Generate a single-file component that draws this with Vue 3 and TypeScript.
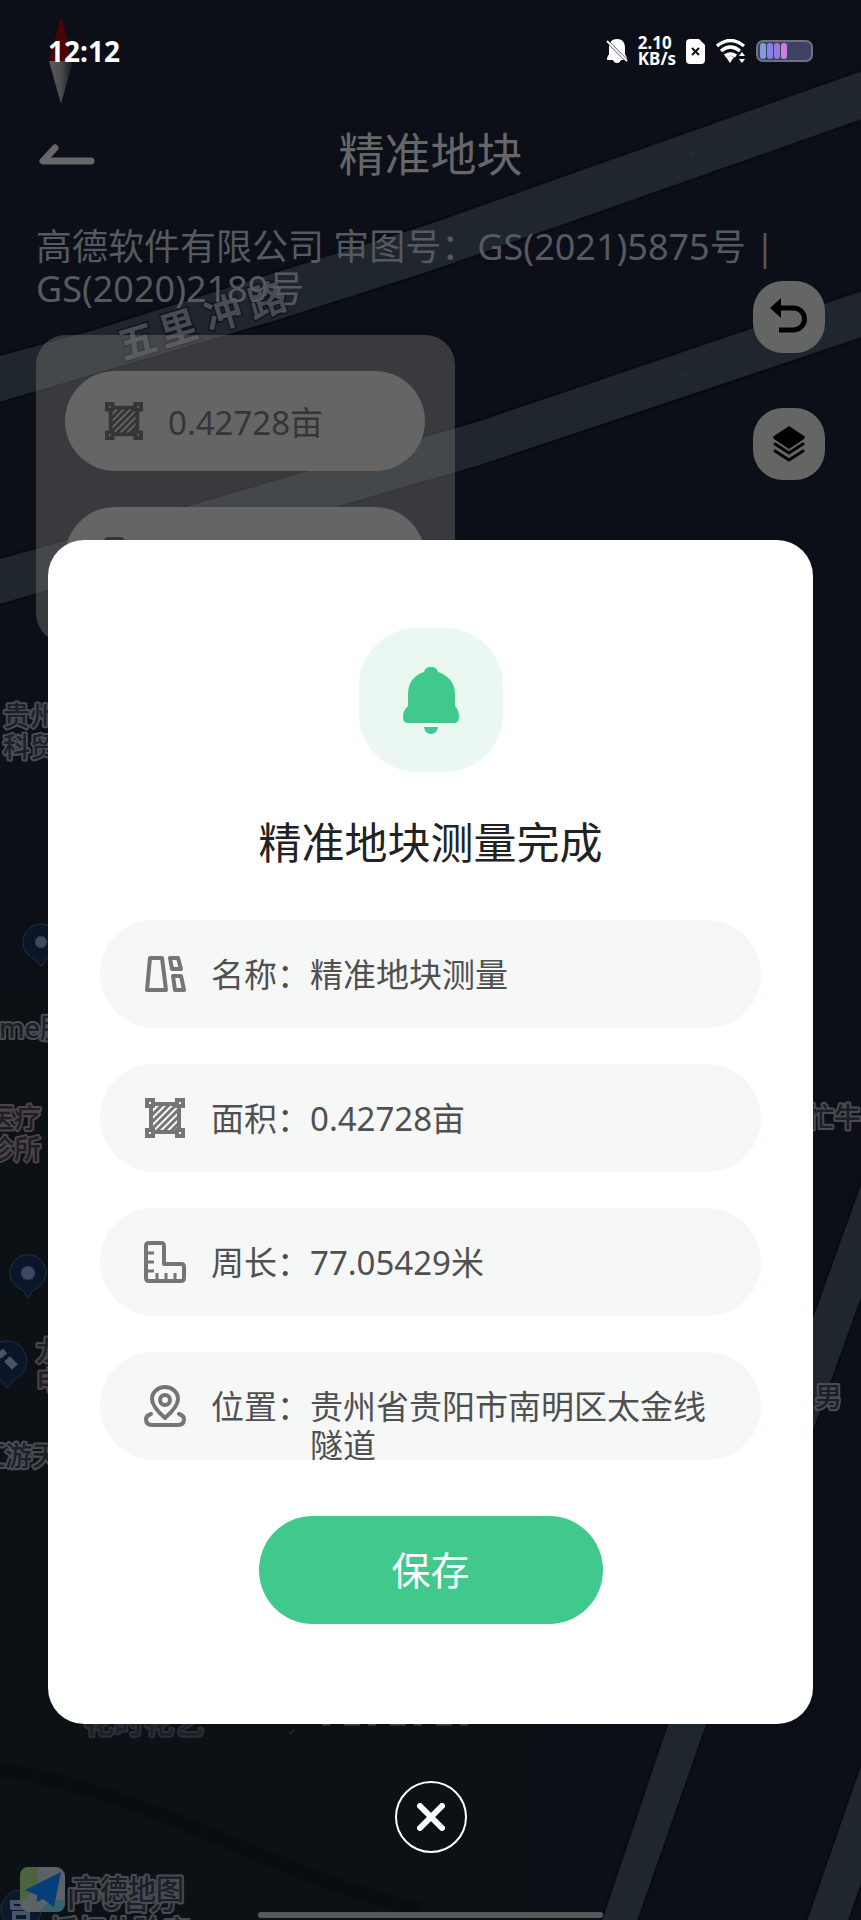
<script setup lang="ts">
import { ref } from 'vue'

interface Field {
  icon: string
  label: string
  value: string
}

interface Place {
  text: string
  x: number
  y: number
  tone?: string
}

const area = '0.42728亩'
const perimeter = '77.05429米'
const open = ref(true)

const fields: Field[] = [
  { icon: 'plots', label: '名称：', value: '精准地块测量' },
  { icon: 'area', label: '面积：', value: area },
  { icon: 'ruler', label: '周长：', value: perimeter },
  { icon: 'pin', label: '位置：', value: '贵州省贵阳市南明区太金线隧道' },
]

const places: Place[] = [
  { text: '贵州', x: 3, y: 726 },
  { text: '科贸', x: 3, y: 757 },
  { text: 'me服', x: -1, y: 1038 },
  { text: '医疗', x: -13, y: 1128, tone: 'warm' },
  { text: '诊所', x: -13, y: 1159, tone: 'warm' },
  { text: '龙', x: 36, y: 1361, tone: 'warm' },
  { text: '电', x: 36, y: 1391, tone: 'warm' },
  { text: '汇游天', x: -22, y: 1466 },
  { text: '忙牛', x: 807, y: 1127 },
  { text: '男', x: 815, y: 1407 },
]
</script>

<template>
  <main class="screen">
    <svg class="symbols" aria-hidden="true">
      <symbol id="plots" viewBox="0 0 42 42" fill="none" stroke="currentColor" stroke-width="4" stroke-linejoin="round">
        <path d="M6 5h12l4 32H3z" />
        <path d="M26 5h8l3 11h-9z" />
        <path d="M29 23h8l3 14h-9z" />
      </symbol>
      <symbol id="area" viewBox="0 0 42 42" fill="none" stroke="currentColor" stroke-width="3">
        <path d="M7 7h28v28H7z" stroke-width="4" />
        <path d="M8 18L18 8M8 25L25 8M8 32L32 8M12 35L35 12M19 35L35 19M26 35l9-9" />
        <path fill="#f6f7f7" stroke-width="4" d="M3 3h6v6H3zM33 3h6v6h-6zM3 33h6v6H3zM33 33h6v6h-6z" />
      </symbol>
      <symbol id="area-dim" viewBox="0 0 42 42" fill="none" stroke="currentColor" stroke-width="3">
        <path d="M7 7h28v28H7z" stroke-width="4" />
        <path d="M8 18L18 8M8 25L25 8M8 32L32 8M12 35L35 12M19 35L35 19M26 35l9-9" />
        <path fill="#656565" stroke-width="4" d="M3 3h6v6H3zM33 3h6v6h-6zM3 33h6v6H3zM33 33h6v6h-6z" />
      </symbol>
      <symbol id="ruler" viewBox="0 0 42 42" fill="none" stroke="currentColor" stroke-width="4" stroke-linejoin="round">
        <path d="M5 2h12q3 0 3 3v18h17q3 0 3 3v11q0 3-3 3H5q-3 0-3-3V5q0-3 3-3z" />
        <path d="M2 12h8M2 21h8M2 30h8M13 40v-8M22 40v-8M31 40v-8" stroke-width="3" />
      </symbol>
      <symbol id="pin" viewBox="0 0 42 42" fill="none" stroke="currentColor" stroke-width="4" stroke-linecap="round" stroke-linejoin="round">
        <path d="M21 33C13 26 8 20 8 14a13 12 0 0 1 26 0c0 6-5 12-13 19z" />
        <circle cx="21" cy="15" r="5" />
        <path d="M7 29c-3 1-5 3-5 5 0 4 2 6 6 6h26c4 0 6-2 6-6 0-2-2-4-5-5" />
      </symbol>
    </svg>

    <svg class="layer map" viewBox="0 0 861 1920" preserveAspectRatio="xMidYMin slice" aria-hidden="true">
      <defs>
        <linearGradient id="ground" x1="0" y1="0" x2="0" y2="1">
          <stop offset="0.350" stop-color="#0c0f17" />
          <stop offset="0.600" stop-color="#0c1115" />
        </linearGradient>
        <linearGradient id="east" x1="0" y1="0" x2="1" y2="0">
          <stop offset="0.550" stop-color="#0c0f17" stop-opacity="0" />
          <stop offset="0.750" stop-color="#0c0f17" />
        </linearGradient>
        <linearGradient id="needle" x1="0" y1="0" x2="1" y2="0">
          <stop offset="0" stop-color="#5b5b5e" />
          <stop offset="0.500" stop-color="#4c4c4e" />
          <stop offset="1" stop-color="#141518" />
        </linearGradient>
      </defs>
      <rect width="861" height="1920" fill="url(#ground)" />
      <rect width="861" height="1920" fill="url(#east)" />
      <g class="road">
        <path d="M-4 356L91 330 430 223 865 69v50L430 272 280 320-4 404z" />
        <path d="M-4 559L175 509 480 420 865 289v48L480 466 300 518-4 606z" />
        <path d="M865 1171l-95 264 26 45 69-191z" />
        <path d="M672 1710h40l-75 214h-37z" />
        <path d="M865 1752l-60 172h43l17-50z" />
      </g>
      <path d="M0 1770C150 1790 270 1875 420 1910" class="track" />
      <g class="street">
        <text x="-19" y="14" transform="translate(137 341) rotate(-17)">五</text>
        <text x="-19" y="14" transform="translate(178 328) rotate(-17)">里</text>
        <text x="-19" y="14" transform="translate(223 313) rotate(-17)">冲</text>
        <text x="-19" y="14" transform="translate(267 300) rotate(-17)">路</text>
      </g>
      <g class="place">
        <text v-for="p in places" :key="p.text" :x="p.x" :y="p.y" :class="p.tone">{{ p.text }}</text>
        <text class="wide" x="84" y="1733">花时花艺</text>
        <path class="tips" d="M322 1724.500h160" />
        <path class="tips-end" d="M289 1731l2 3 3-5" />
      </g>
      <g class="marker">
        <path d="M41 966l-6-7a18 18 0 1 1 12 0z" />
        <circle cx="41" cy="942" r="6" />
        <path d="M28 1298l-5-8a18 18 0 1 1 10 0z" />
        <circle cx="28" cy="1273" r="7" />
        <path d="M7 1388l-6-8a20 20 0 1 1 14-1z" />
        <path class="glyph" d="M0 1351l4 5M7 1359l8 8" />
        <circle class="halo" cx="21" cy="1910" r="20" />
        <path class="glyph thin" d="M12 1902h18v6H12zM14 1913h14v8H14z" />
      </g>
      <g class="place">
        <text class="brand" x="67" y="1910">PPU官方</text>
        <text class="brand" x="50" y="1941">授权体验店</text>
        <text class="brand" x="72" y="1900">高德地图</text>
      </g>
      <g>
        <rect x="20" y="1867" width="45" height="45" rx="9" fill="#5c6266" />
        <path d="M29 1867h9v20l-18 16v-27q0-9 9-9z" fill="#4b6440" />
        <path d="M38 1912l14-12h13v3q0 9-9 9z" fill="#35626c" />
        <path d="M61 1872l-36 18 12 5v7l6-3 11 8z" fill="#063e7c" />
      </g>
      <path d="M61 16l12 45H49z" fill="#4c0306" />
      <path d="M49 61h24l-12 43z" fill="url(#needle)" />
      <path class="arrow" d="M698 154h-8l3-3m-3 3l3 3M689 374h-8l3-3m-3 3l3 3" />
    </svg>

    <div class="layer page">
      <header class="bar">
        <button class="back" type="button" aria-label="返回">
          <svg width="56" height="22" viewBox="0 0 56 22"><path d="M16 4L4 17h48" /></svg>
        </button>
        <h1>精准地块</h1>
      </header>
      <p class="credit">高德软件有限公司 审图号：GS(2021)5875号 | GS(2020)2189号</p>
      <div class="tools">
        <section class="panel">
          <div class="pill">
            <svg width="40" height="40"><use href="#area-dim" /></svg>
            <span>{{ area }}</span>
          </div>
          <div class="pill">
            <svg width="40" height="40"><use href="#ruler" /></svg>
            <span>{{ perimeter }}</span>
          </div>
        </section>
        <div class="actions">
          <button type="button" aria-label="撤销">
            <svg width="40" height="40" viewBox="0 0 40 40">
              <path d="M12 1v20L1 11z" />
              <path d="M11 11h13.500a11 11 0 0 1 0 22H10" fill="none" stroke="#000" stroke-width="5" />
            </svg>
          </button>
          <button type="button" aria-label="图层">
            <svg width="40" height="40" viewBox="0 0 40 40">
              <path d="M20 2l15 10q2 1 0 3L20 25 5 15q-2-2 0-3z" />
              <path d="M6 20l14 9 14-9M6 27l14 9 14-9" fill="none" stroke="#000" stroke-width="3" stroke-linecap="round" />
            </svg>
          </button>
        </div>
      </div>
    </div>

    <div class="layer status">
      <time>12:12</time>
      <div class="signals">
        <svg width="22" height="26" viewBox="0 0 22 26">
          <path d="M11 1c6 0 8 4 8 9v6l2 4v2h-6q-1 3-4 3t-4-3H1v-2l2-4v-6c0-5 2-9 8-9z" fill="#fff" />
          <path d="M-1 1l23 23" stroke="#0c0f17" stroke-width="3" />
          <path d="M1 3l20 20" stroke="#fff" stroke-width="2" />
        </svg>
        <span class="speed">2.10<br>KB/s</span>
        <svg width="20" height="25" viewBox="0 0 20 25">
          <path d="M4 0h9l6 6v15q0 4-4 4H4q-4 0-4-4V4q0-4 4-4z" fill="#fff" />
          <path d="M6 9l7 7M13 9l-7 7" stroke="#0c0f17" stroke-width="2" />
        </svg>
        <svg width="30" height="24" viewBox="0 0 30 24">
          <g fill="none" stroke="#fff" stroke-width="3.500">
            <path d="M1 7q13.500-11 27 0M5 12q9.500-8 19 0M9 17q5.500-4 11 0" />
          </g>
          <path d="M10 18q4.500-2 8 0l-4 6z" fill="#fff" />
          <path d="M26 13l3 4h-6zM26 24l3-4h-6z" fill="#fff" />
        </svg>
        <svg width="57" height="22" viewBox="0 0 57 22">
          <rect x="1" y="1" width="55" height="20" rx="6" fill="#3d4162" stroke="#6d7180" stroke-width="2" />
          <rect x="4" y="3" width="6" height="16" rx="3" fill="#829be0" />
          <rect x="11" y="3" width="6" height="16" rx="3" fill="#8584e2" />
          <rect x="18" y="3" width="6" height="16" rx="3" fill="#9d78dc" />
          <rect x="25" y="3" width="6" height="16" rx="3" fill="#c982dc" />
        </svg>
      </div>
    </div>

    <div v-if="open" class="layer overlay">
      <section class="dialog" role="dialog" aria-labelledby="done">
        <div class="badge">
          <svg width="58" height="68" viewBox="0 0 58 68" fill="#41c88c">
            <path d="M22 6q1-5 7-5t7 5C46 9 53 17 53 28v12q4 4 4 11 0 6-5 6H6q-5 0-5-6 0-7 5-11V28C6 17 12 9 22 6z" />
            <path d="M22 61h14q-1 7-7 7t-7-7z" />
          </svg>
        </div>
        <h2 id="done">精准地块测量完成</h2>
        <dl>
          <div v-for="f in fields" :key="f.icon" class="field">
            <svg width="42" height="42"><use :href="'#' + f.icon" /></svg>
            <dt>{{ f.label }}</dt>
            <dd>{{ f.value }}</dd>
          </div>
        </dl>
        <button class="save" type="button">保存</button>
      </section>
      <button class="close" type="button" aria-label="关闭" @click="open = false">
        <svg width="28" height="28" viewBox="0 0 28 28"><path d="M3 3l22 22M25 3L3 25" /></svg>
      </button>
      <div class="home"></div>
    </div>
  </main>
</template>

<style>
body {
  margin: 0;
  background: #0c0f17;
}
</style>

<style scoped>
.screen {
  display: grid;
  grid-template-columns: minmax(0, 1fr);
  min-height: 100vh;
  overflow: hidden;
  background: #0c0f17;
  font-family: "Noto Sans", "Noto Sans CJK SC", sans-serif;
  color: #fff;
}
.screen * {
  box-sizing: border-box;
}
.symbols {
  position: absolute;
  width: 0;
  height: 0;
}
.layer {
  grid-area: 1 / 1;
}
button {
  display: flex;
  align-items: center;
  justify-content: center;
  padding: 0;
  border: 0;
  background: none;
  font-family: inherit;
  cursor: pointer;
}
svg {
  flex: none;
  display: block;
}

.map {
  width: 100%;
  height: 100%;
  min-height: 0;
  contain: size;
}
.road {
  fill: #20262d;
  stroke: #080b13;
  stroke-width: 2;
}
.track {
  fill: none;
  stroke: #090c10;
  stroke-width: 14;
}
.street {
  font-size: 38px;
  font-weight: 700;
  fill: #464b54;
  stroke: #12151c;
  stroke-width: 3;
  paint-order: stroke;
}
.place {
  font-size: 27px;
  font-weight: 500;
  fill: #1c1f25;
  stroke: #484b51;
  stroke-width: 4;
  stroke-linejoin: round;
  paint-order: stroke;
}
.place .warm {
  stroke: #4d4448;
}
.place .wide {
  font-size: 30px;
  stroke: #2a2f35;
}
.place .brand {
  font-size: 28px;
}
.place .tips {
  fill: none;
  stroke: #3f4246;
  stroke-width: 2;
  stroke-dasharray: 8 14 16 8;
}
.place .tips-end {
  fill: none;
  stroke: #2a3138;
  stroke-width: 1;
}
.marker {
  fill: #0b152a;
  stroke: #252f40;
  stroke-width: 1;
}
.marker circle {
  fill: #3f4a62;
}
.marker .halo {
  fill: #0c182c;
}
.marker .glyph {
  fill: none;
  stroke: #4a5468;
  stroke-width: 8;
}
.marker .thin {
  stroke-width: 4;
}
.arrow {
  fill: none;
  stroke: #332f36;
  stroke-width: 1;
}

.status {
  display: flex;
  align-items: flex-start;
  justify-content: space-between;
  padding: 32px 48px 0;
  height: 72px;
}
.status time {
  font-size: 28px;
  line-height: 38px;
  font-weight: 700;
}
.signals {
  display: flex;
  align-items: center;
  gap: 10px;
  height: 38px;
}
.speed {
  font-size: 17px;
  line-height: 16px;
  font-weight: 700;
}

.page {
  padding-top: 120px;
}
.bar {
  display: grid;
  grid-template-columns: 1fr auto 1fr;
  align-items: center;
  height: 70px;
  padding: 0 39px;
}
.back {
  justify-self: start;
}
.back path {
  fill: none;
  stroke: #656769;
  stroke-width: 7;
  stroke-linecap: round;
  stroke-linejoin: round;
}
h1 {
  margin: 0;
  padding-bottom: 4px;
  font-size: 46px;
  line-height: 60px;
  font-weight: 400;
  color: #656769;
}
.credit {
  margin: 36px 36px 0;
  font-size: 36px;
  line-height: 42px;
  color: #56595f;
}
.tools {
  display: flex;
  justify-content: space-between;
  align-items: flex-start;
  padding: 0 36px;
}
.panel {
  display: grid;
  gap: 36px;
  width: 419px;
  margin-top: 25px;
  padding: 36px 30px 36px 29px;
  border-radius: 30px;
  background: rgba(120, 120, 115, 0.42);
}
.pill {
  display: flex;
  align-items: center;
  gap: 24px;
  height: 100px;
  padding-left: 39px;
  border-radius: 50px;
  background: #656565;
  color: #353535;
  font-size: 33px;
}
.actions {
  display: grid;
  gap: 55px;
  margin-top: -29px;
}
.actions button {
  width: 72px;
  height: 72px;
  border-radius: 30px;
  background: #636664;
}

.overlay {
  display: flex;
  flex-direction: column;
  align-items: center;
  padding: 540px 48px 0;
}
.dialog {
  display: flex;
  flex-direction: column;
  align-items: center;
  align-self: stretch;
  padding: 88px 52px 100px;
  border-radius: 36px;
  background: #fff;
}
.badge {
  display: flex;
  align-items: center;
  justify-content: center;
  width: 144px;
  height: 144px;
  border-radius: 58px;
  background: #eaf8f1;
}
h2 {
  margin: 41px 0 47px;
  font-size: 43px;
  line-height: 60px;
  font-weight: 400;
  color: #222;
}
dl {
  display: grid;
  gap: 36px;
  align-self: stretch;
  margin: 0;
}
.field {
  display: flex;
  height: 108px;
  padding: 33px 36px 0 44px;
  overflow: hidden;
  border-radius: 54px;
  background: #f6f7f7;
  color: #505050;
  font-size: 33px;
  line-height: 39px;
}
.field svg {
  margin-right: 25px;
  color: #757575;
}
dt,
dd {
  margin: 0;
  padding-top: 2px;
}
dt {
  flex: none;
}
.save {
  width: 344px;
  height: 108px;
  margin-top: 56px;
  padding-bottom: 4px;
  border-radius: 54px;
  background: #41c88c;
  color: #fff;
  font-size: 39px;
}
.close {
  width: 72px;
  height: 72px;
  margin-top: 57px;
  border: 2px solid #fff;
  border-radius: 50%;
}
.close path {
  stroke: #fff;
  stroke-width: 6;
  stroke-linecap: round;
}
.home {
  width: 45%;
  height: 6px;
  margin: auto 0 2px;
  border-radius: 3px;
  background: #58595b;
}
</style>
